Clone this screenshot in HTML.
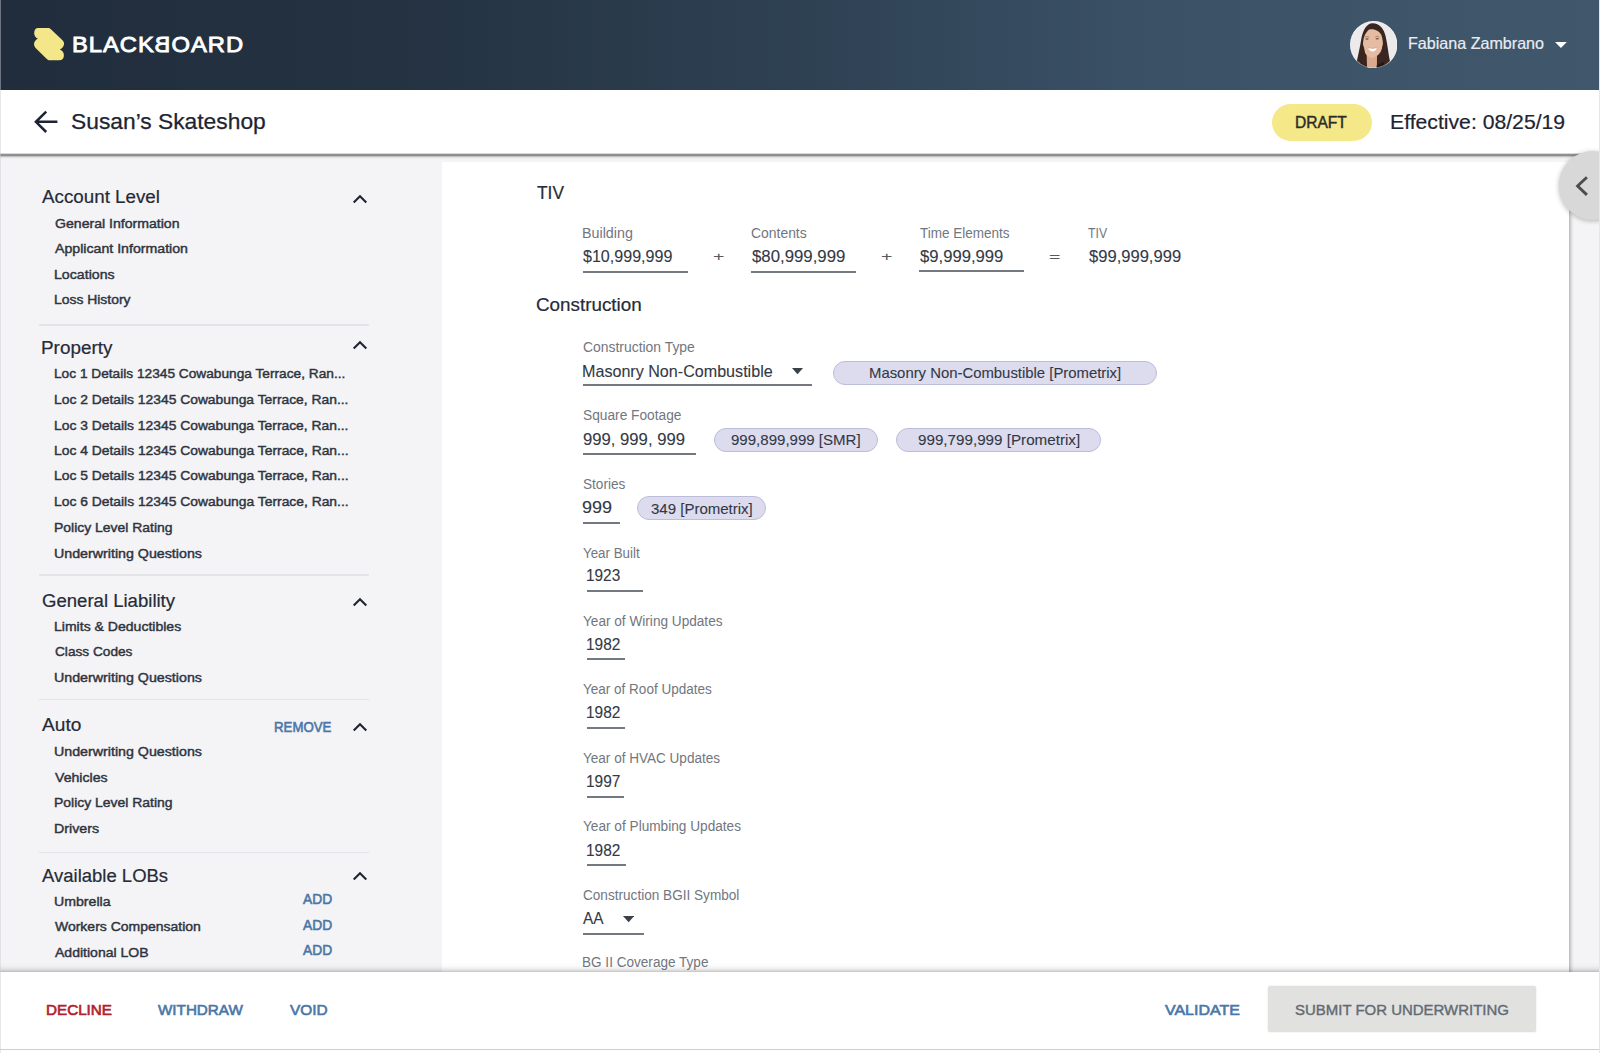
<!DOCTYPE html>
<html lang="en"><head><meta charset="utf-8"><title>Blackboard</title>
<style>
html,body{margin:0;padding:0}
body{width:1600px;height:1053px;position:relative;overflow:hidden;background:#f4f4f6;font-family:"Liberation Sans",Arial,sans-serif}
.a{position:absolute;display:block}
.t{position:absolute;white-space:pre;line-height:1;transform-origin:0 50%;display:block}
.pill{background:#dcdcee;border:1px solid #bcbddb;border-radius:13px;box-sizing:border-box}
#hdr{left:0;top:0;width:1600px;height:90px;background:linear-gradient(90deg,#212d3d 0%,#243242 25%,#2e4153 50%,#3b5166 72%,#40576c 100%)}
#sub{left:0;top:90px;width:1600px;height:63px;background:#fff}
#subsh{left:0;top:152.5px;width:1600px;height:6.5px;background:linear-gradient(180deg,#fff 0%,#dcdcdc 8%,#8f8f8f 24%,#8f8f8f 42%,#bdbdbf 57%,#e8e8ea 77%,#f4f4f6 100%)}
#main{left:441.8px;top:162px;width:1127.6px;height:820px;background:#fff}
#mainsh{left:1569.4px;top:162px;width:4.2px;height:820px;background:linear-gradient(90deg,rgba(0,0,0,.24) 0%,rgba(0,0,0,.17) 25%,rgba(0,0,0,.06) 60%,rgba(0,0,0,0) 100%)}
#foot{left:0;top:971.6px;width:1600px;height:82px;background:#fff}
#footsh{left:0;top:962.5px;width:1600px;height:9.1px;background:linear-gradient(180deg,rgba(0,0,0,0) 0%,rgba(0,0,0,.02) 35%,rgba(0,0,0,.07) 65%,rgba(0,0,0,.16) 88%,rgba(0,0,0,.24) 100%)}
#bline{left:0;top:1048.6px;width:1600px;height:1px;background:#cfcfcf}
#ledge{left:0;top:0;width:1px;height:1053px;background:rgba(205,205,210,.45)}
#tab{left:1558.5px;top:151.4px;width:68.8px;height:68.8px;border-radius:50%;background:#d8d8d8;box-shadow:0 1px 5px rgba(0,0,0,.28)}
#redge{left:1599px;top:0;width:1px;height:1053px;background:#e6e6e6}
#logo{position:absolute;left:71.6px;top:34px;font-size:22.2px;line-height:1;font-weight:400;color:#fff;-webkit-text-stroke:.85px #fff;white-space:pre;letter-spacing:.9px;transform-origin:0 50%;transform:scaleX(1.071)}
#logo i{display:inline-block;font-style:normal;transform:scaleX(-1);letter-spacing:0;margin-right:.9px}
#btn{left:1268px;top:986.4px;width:267.6px;height:45.4px;background:#e1e1e0;border-radius:2.5px;box-shadow:0 0 1.5px rgba(0,0,0,.18)}
</style></head><body>
<main>
<div id="main" class="a"></div>
<div id="mainsh" class="a"></div>
<div class="a" style="left:582.5px;top:271px;width:105.0px;height:1.6px;background:#747880"></div>
<div class="a" style="left:751px;top:271px;width:104.75px;height:1.6px;background:#747880"></div>
<div class="a" style="left:919.25px;top:270px;width:104.5px;height:1.6px;background:#747880"></div>
<div class="a" style="left:583.25px;top:384px;width:228.75px;height:1.6px;background:#747880"></div>
<div class="a" style="left:582.5px;top:453px;width:113.75px;height:1.6px;background:#747880"></div>
<div class="a" style="left:582.5px;top:522px;width:37.5px;height:1.6px;background:#747880"></div>
<div class="a" style="left:587px;top:590px;width:56.25px;height:1.6px;background:#747880"></div>
<div class="a" style="left:587px;top:658px;width:37.5px;height:1.6px;background:#747880"></div>
<div class="a" style="left:587px;top:727px;width:37.5px;height:1.6px;background:#747880"></div>
<div class="a" style="left:587px;top:796px;width:36.5px;height:1.6px;background:#747880"></div>
<div class="a" style="left:587px;top:864px;width:39px;height:1.6px;background:#747880"></div>
<div class="a" style="left:583.25px;top:933px;width:60.5px;height:1.6px;background:#747880"></div>
<div class="a pill" style="left:833.25px;top:360.75px;width:323.75px;height:24.25px"></div>
<div class="a pill" style="left:713.75px;top:427.75px;width:164.25px;height:24.0px"></div>
<div class="a pill" style="left:896.25px;top:427.75px;width:205.0px;height:24.0px"></div>
<div class="a pill" style="left:637px;top:496.25px;width:128.5px;height:24.0px"></div>
<svg class="a" style="left:792px;top:368.3px" width="11" height="6.3" viewBox="0 0 11 6.3"><path d="M0 0H11L5.50 6.3Z" fill="#3c404a"/></svg>
<svg class="a" style="left:622.5px;top:916.3px" width="11.25" height="6.3" viewBox="0 0 11.25 6.3"><path d="M0 0H11.25L5.62 6.3Z" fill="#3c404a"/></svg>
<span class="t" style="left:536.71px;top:184.00px;font-size:18.0px;color:#262b38;transform:scaleX(0.9646);-webkit-text-stroke:0.2px #262b38;">TIV</span>
<span class="t" style="left:536.15px;top:297.00px;font-size:17.5px;color:#262b38;transform:scaleX(1.0760);-webkit-text-stroke:0.2px #262b38;">Construction</span>
<span class="t" style="left:582.08px;top:226.00px;font-size:14.0px;color:#72767e;transform:scaleX(1.0204);">Building</span>
<span class="t" style="left:583.12px;top:248.00px;font-size:17.0px;color:#343945;transform:scaleX(0.9449);-webkit-text-stroke:0.1px #343945;">$10,999,999</span>
<span class="t" style="left:751.04px;top:226.00px;font-size:14.0px;color:#72767e;transform:scaleX(0.9940);">Contents</span>
<span class="t" style="left:751.62px;top:248.00px;font-size:17.0px;color:#343945;transform:scaleX(0.9876);-webkit-text-stroke:0.1px #343945;">$80,999,999</span>
<span class="t" style="left:919.70px;top:226.00px;font-size:14.0px;color:#72767e;transform:scaleX(0.9644);">Time Elements</span>
<span class="t" style="left:919.87px;top:248.00px;font-size:17.0px;color:#343945;transform:scaleX(0.9797);-webkit-text-stroke:0.1px #343945;">$9,999,999</span>
<span class="t" style="left:1088.47px;top:226.00px;font-size:14.0px;color:#72767e;transform:scaleX(0.8760);">TIV</span>
<span class="t" style="left:1088.62px;top:248.00px;font-size:17.0px;color:#343945;transform:scaleX(0.9743);-webkit-text-stroke:0.1px #343945;">$99,999,999</span>
<span class="t" style="left:712.65px;top:250.00px;font-size:13.0px;color:#555a62;transform:scaleX(1.5037);">+</span>
<span class="t" style="left:880.85px;top:250.00px;font-size:13.0px;color:#555a62;transform:scaleX(1.5037);">+</span>
<span class="t" style="left:1049.35px;top:250.00px;font-size:13.0px;color:#555a62;transform:scaleX(1.5037);">=</span>
<span class="t" style="left:582.54px;top:340.00px;font-size:14.0px;color:#72767e;transform:scaleX(0.9932);">Construction Type</span>
<span class="t" style="left:581.98px;top:363.00px;font-size:17.0px;color:#343945;transform:scaleX(0.9475);-webkit-text-stroke:0.1px #343945;">Masonry Non-Combustible</span>
<span class="t" style="left:582.63px;top:408.00px;font-size:14.0px;color:#72767e;transform:scaleX(0.9809);">Square Footage</span>
<span class="t" style="left:582.52px;top:431.00px;font-size:17.0px;color:#343945;transform:scaleX(0.9807);-webkit-text-stroke:0.1px #343945;">999, 999, 999</span>
<span class="t" style="left:582.63px;top:477.00px;font-size:14.0px;color:#72767e;transform:scaleX(0.9720);">Stories</span>
<span class="t" style="left:582.46px;top:499.00px;font-size:17.0px;color:#343945;transform:scaleX(1.0605);-webkit-text-stroke:0.1px #343945;">999</span>
<span class="t" style="left:582.96px;top:546.00px;font-size:14.0px;color:#72767e;transform:scaleX(0.9532);">Year Built</span>
<span class="t" style="left:585.87px;top:567.00px;font-size:17.0px;color:#343945;transform:scaleX(0.9056);-webkit-text-stroke:0.1px #343945;">1923</span>
<span class="t" style="left:582.95px;top:614.00px;font-size:14.0px;color:#72767e;transform:scaleX(0.9727);">Year of Wiring Updates</span>
<span class="t" style="left:585.87px;top:636.00px;font-size:17.0px;color:#343945;transform:scaleX(0.9084);-webkit-text-stroke:0.1px #343945;">1982</span>
<span class="t" style="left:582.95px;top:682.00px;font-size:14.0px;color:#72767e;transform:scaleX(0.9657);">Year of Roof Updates</span>
<span class="t" style="left:585.87px;top:704.00px;font-size:17.0px;color:#343945;transform:scaleX(0.9084);-webkit-text-stroke:0.1px #343945;">1982</span>
<span class="t" style="left:582.95px;top:751.00px;font-size:14.0px;color:#72767e;transform:scaleX(0.9675);">Year of HVAC Updates</span>
<span class="t" style="left:585.87px;top:773.00px;font-size:17.0px;color:#343945;transform:scaleX(0.9084);-webkit-text-stroke:0.1px #343945;">1997</span>
<span class="t" style="left:582.95px;top:819.00px;font-size:14.0px;color:#72767e;transform:scaleX(0.9746);">Year of Plumbing Updates</span>
<span class="t" style="left:585.87px;top:842.00px;font-size:17.0px;color:#343945;transform:scaleX(0.9084);-webkit-text-stroke:0.1px #343945;">1982</span>
<span class="t" style="left:582.56px;top:888.00px;font-size:14.0px;color:#72767e;transform:scaleX(0.9707);">Construction BGII Symbol</span>
<span class="t" style="left:583.27px;top:910.00px;font-size:17.0px;color:#343945;transform:scaleX(0.9022);-webkit-text-stroke:0.1px #343945;">AA</span>
<span class="t" style="left:582.14px;top:955.00px;font-size:14.0px;color:#72767e;transform:scaleX(0.9692);">BG II Coverage Type</span>
<span class="t" style="left:868.83px;top:365.00px;font-size:15.0px;color:#333846;transform:scaleX(0.9919);-webkit-text-stroke:0.1px #333846;">Masonry Non-Combustible [Prometrix]</span>
<span class="t" style="left:731.34px;top:432.00px;font-size:15.0px;color:#333846;transform:scaleX(1.0032);-webkit-text-stroke:0.1px #333846;">999,899,999 [SMR]</span>
<span class="t" style="left:918.09px;top:432.00px;font-size:15.0px;color:#333846;transform:scaleX(1.0131);-webkit-text-stroke:0.1px #333846;">999,799,999 [Prometrix]</span>
<span class="t" style="left:651.23px;top:501.00px;font-size:15.0px;color:#333846;transform:scaleX(1.0007);-webkit-text-stroke:0.1px #333846;">349 [Prometrix]</span>
</main>
<aside><nav>
<div class="a" style="left:39px;top:324.25px;width:330px;height:1.5px;background:#e4e4e8"></div>
<div class="a" style="left:39px;top:574.35px;width:330px;height:1.5px;background:#e4e4e8"></div>
<div class="a" style="left:39px;top:698.75px;width:330px;height:1.5px;background:#e4e4e8"></div>
<div class="a" style="left:39px;top:851.55px;width:330px;height:1.5px;background:#e4e4e8"></div>
<svg class="a" style="left:350.6px;top:191.8px" width="18" height="14" viewBox="0 0 18 14"><path d="M2.7 10.6 L9 4.3 L15.3 10.6" fill="none" stroke="#1f2430" stroke-width="2.1"/></svg>
<svg class="a" style="left:350.6px;top:338.2px" width="18" height="14" viewBox="0 0 18 14"><path d="M2.7 10.6 L9 4.3 L15.3 10.6" fill="none" stroke="#1f2430" stroke-width="2.1"/></svg>
<svg class="a" style="left:350.6px;top:595.4px" width="18" height="14" viewBox="0 0 18 14"><path d="M2.7 10.6 L9 4.3 L15.3 10.6" fill="none" stroke="#1f2430" stroke-width="2.1"/></svg>
<svg class="a" style="left:350.6px;top:719.5px" width="18" height="14" viewBox="0 0 18 14"><path d="M2.7 10.6 L9 4.3 L15.3 10.6" fill="none" stroke="#1f2430" stroke-width="2.1"/></svg>
<svg class="a" style="left:350.6px;top:869px" width="18" height="14" viewBox="0 0 18 14"><path d="M2.7 10.6 L9 4.3 L15.3 10.6" fill="none" stroke="#1f2430" stroke-width="2.1"/></svg>
<span class="t" style="left:42.37px;top:188.00px;font-size:18.0px;color:#262b38;transform:scaleX(1.0434);-webkit-text-stroke:0.2px #262b38;">Account Level</span>
<span class="t" style="left:41.36px;top:339.00px;font-size:18.0px;color:#262b38;transform:scaleX(1.0492);-webkit-text-stroke:0.2px #262b38;">Property</span>
<span class="t" style="left:41.97px;top:592.00px;font-size:18.0px;color:#262b38;transform:scaleX(1.0309);-webkit-text-stroke:0.2px #262b38;">General Liability</span>
<span class="t" style="left:42.37px;top:716.00px;font-size:18.0px;color:#262b38;transform:scaleX(1.0620);-webkit-text-stroke:0.2px #262b38;">Auto</span>
<span class="t" style="left:42.37px;top:867.00px;font-size:18.0px;color:#262b38;transform:scaleX(1.0273);-webkit-text-stroke:0.2px #262b38;">Available LOBs</span>
<span class="t" style="left:54.73px;top:217.00px;font-size:13.5px;color:#2f343f;transform:scaleX(1.0439);-webkit-text-stroke:0.45px #2f343f;">General Information</span>
<span class="t" style="left:55.41px;top:242.00px;font-size:13.5px;color:#2f343f;transform:scaleX(1.0485);-webkit-text-stroke:0.45px #2f343f;">Applicant Information</span>
<span class="t" style="left:54.27px;top:268.00px;font-size:13.5px;color:#2f343f;transform:scaleX(1.0485);-webkit-text-stroke:0.45px #2f343f;">Locations</span>
<span class="t" style="left:54.29px;top:293.00px;font-size:13.5px;color:#2f343f;transform:scaleX(1.0299);-webkit-text-stroke:0.45px #2f343f;">Loss History</span>
<span class="t" style="left:54.30px;top:367.00px;font-size:13.5px;color:#2f343f;transform:scaleX(1.0144);-webkit-text-stroke:0.45px #2f343f;">Loc 1 Details 12345 Cowabunga Terrace, Ran...</span>
<span class="t" style="left:54.30px;top:393.00px;font-size:13.5px;color:#2f343f;transform:scaleX(1.0252);-webkit-text-stroke:0.45px #2f343f;">Loc 2 Details 12345 Cowabunga Terrace, Ran...</span>
<span class="t" style="left:54.30px;top:419.00px;font-size:13.5px;color:#2f343f;transform:scaleX(1.0252);-webkit-text-stroke:0.45px #2f343f;">Loc 3 Details 12345 Cowabunga Terrace, Ran...</span>
<span class="t" style="left:54.29px;top:444.00px;font-size:13.5px;color:#2f343f;transform:scaleX(1.0259);-webkit-text-stroke:0.45px #2f343f;">Loc 4 Details 12345 Cowabunga Terrace, Ran...</span>
<span class="t" style="left:54.29px;top:469.00px;font-size:13.5px;color:#2f343f;transform:scaleX(1.0259);-webkit-text-stroke:0.45px #2f343f;">Loc 5 Details 12345 Cowabunga Terrace, Ran...</span>
<span class="t" style="left:54.29px;top:495.00px;font-size:13.5px;color:#2f343f;transform:scaleX(1.0259);-webkit-text-stroke:0.45px #2f343f;">Loc 6 Details 12345 Cowabunga Terrace, Ran...</span>
<span class="t" style="left:54.29px;top:521.00px;font-size:13.5px;color:#2f343f;transform:scaleX(1.0319);-webkit-text-stroke:0.45px #2f343f;">Policy Level Rating</span>
<span class="t" style="left:54.34px;top:547.00px;font-size:13.5px;color:#2f343f;transform:scaleX(1.0542);-webkit-text-stroke:0.45px #2f343f;">Underwriting Questions</span>
<span class="t" style="left:54.28px;top:620.00px;font-size:13.5px;color:#2f343f;transform:scaleX(1.0399);-webkit-text-stroke:0.45px #2f343f;">Limits &amp; Deductibles</span>
<span class="t" style="left:54.73px;top:645.00px;font-size:13.5px;color:#2f343f;transform:scaleX(1.0118);-webkit-text-stroke:0.45px #2f343f;">Class Codes</span>
<span class="t" style="left:54.34px;top:671.00px;font-size:13.5px;color:#2f343f;transform:scaleX(1.0542);-webkit-text-stroke:0.45px #2f343f;">Underwriting Questions</span>
<span class="t" style="left:54.34px;top:745.00px;font-size:13.5px;color:#2f343f;transform:scaleX(1.0542);-webkit-text-stroke:0.45px #2f343f;">Underwriting Questions</span>
<span class="t" style="left:55.37px;top:771.00px;font-size:13.5px;color:#2f343f;transform:scaleX(1.0458);-webkit-text-stroke:0.45px #2f343f;">Vehicles</span>
<span class="t" style="left:54.29px;top:796.00px;font-size:13.5px;color:#2f343f;transform:scaleX(1.0319);-webkit-text-stroke:0.45px #2f343f;">Policy Level Rating</span>
<span class="t" style="left:54.27px;top:822.00px;font-size:13.5px;color:#2f343f;transform:scaleX(1.0528);-webkit-text-stroke:0.45px #2f343f;">Drivers</span>
<span class="t" style="left:54.35px;top:895.00px;font-size:13.5px;color:#2f343f;transform:scaleX(1.0463);-webkit-text-stroke:0.45px #2f343f;">Umbrella</span>
<span class="t" style="left:55.37px;top:920.00px;font-size:13.5px;color:#2f343f;transform:scaleX(1.0354);-webkit-text-stroke:0.45px #2f343f;">Workers Compensation</span>
<span class="t" style="left:55.41px;top:946.00px;font-size:13.5px;color:#2f343f;transform:scaleX(1.0393);-webkit-text-stroke:0.45px #2f343f;">Additional LOB</span>
<span class="t" style="left:274.20px;top:720.00px;font-size:14.0px;color:#4a77a8;transform:scaleX(0.9456);-webkit-text-stroke:0.6px #4a77a8;">REMOVE</span>
<span class="t" style="left:302.57px;top:892.00px;font-size:14.0px;color:#4a77a8;transform:scaleX(0.9842);-webkit-text-stroke:0.6px #4a77a8;">ADD</span>
<span class="t" style="left:302.57px;top:918.00px;font-size:14.0px;color:#4a77a8;transform:scaleX(0.9842);-webkit-text-stroke:0.6px #4a77a8;">ADD</span>
<span class="t" style="left:302.57px;top:943.00px;font-size:14.0px;color:#4a77a8;transform:scaleX(0.9842);-webkit-text-stroke:0.6px #4a77a8;">ADD</span>
</nav></aside>
<header>
<div id="hdr" class="a"></div>
<svg class="a" style="left:32px;top:25px" width="36" height="38" viewBox="32 25 36 38"><path d="M38.4 27.9 H47.9 C49.2 27.9 50 28.3 50.9 29.2 L62.5 40.2 C64.1 41.8 64.4 43.8 63.7 45.6 C63 47.4 61.6 48.8 59.8 49.6 C62.5 50.7 63.9 52.6 63.9 55.2 C63.9 58.4 62.2 60.3 59.2 60.3 H49.8 C48.5 60.3 47.7 59.9 46.8 59 L35.6 47.9 C34 46.3 33.7 44 34.4 42.3 C35 40.6 36.3 39.4 38 38.7 C35.2 37.6 34.2 35.4 34.2 33 C34.2 29.8 35.6 27.9 38.4 27.9 Z" fill="#f3e78a"/></svg>
<div id="logo">BLACK<i>B</i>OARD</div>
<svg class="a" style="left:1349.9px;top:20.9px" width="47.4" height="47.4" viewBox="0 0 48 48"><defs><clipPath id="av"><circle cx="24" cy="24" r="23.9"/></clipPath></defs>
<g clip-path="url(#av)"><rect width="48" height="48" fill="#eceaea"/>
<path d="M22.8 2.3 C17 2.5 13 9 11.3 19 C10 27 8.5 34 6.6 42 L16 49 L32 49 L40.5 41 C38.8 33 38.2 25 36.2 16 C34.5 8 30 2.3 22.8 2.3Z" fill="#3a2620"/>
<path d="M16.8 32 L17.3 48 L27.2 48 L27.4 32Z" fill="#d9aa8e"/>
<path d="M19.5 8.6 C24 7.4 30 9.5 32 15 C34 21 33.6 27 31 31.5 C28.5 35.6 25 37.2 22.5 37.2 C19 37.2 15.5 34 14 29.5 C12.5 25 13 18 15.5 13.5 C16.8 11.2 18 9.6 19.5 8.6Z" fill="#e5bba2"/>
<path d="M13.6 24 C12.6 32 11 40 9.6 48 L17.6 48 C16.2 42 15.4 36 15 31Z M33.3 24 C33.5 32 35 40 38.4 46 L27 48 C29 43 31 37 31.6 31Z" fill="#3a2620"/>
<path d="M8.5 48 L11.5 42.5 L17.6 46.4 L17.6 48Z M27 48 L27 45.2 L33.5 41.2 L37 48Z" fill="#1c1a1c"/>
<ellipse cx="17.2" cy="18.3" rx="1.7" ry=".8" fill="#5c3d30" opacity=".85"/><ellipse cx="27.6" cy="18" rx="1.7" ry=".8" fill="#5c3d30" opacity=".85"/>
<path d="M15.2 16.4 Q17.2 15.3 19.4 16.2 M25.6 16 Q27.8 15 29.8 16.2" fill="none" stroke="#6b4a3c" stroke-width=".7" opacity=".7"/>
<path d="M18.4 27.1 Q22.8 28.5 27.3 27 Q26.2 30.7 22.8 30.9 Q19.7 30.7 18.4 27.1Z" fill="#fff"/>
<path d="M18.4 27.1 Q22.8 28.5 27.3 27" fill="none" stroke="#c98a78" stroke-width=".5"/>
</g><circle cx="24" cy="24" r="23.6" fill="none" stroke="rgba(255,255,255,.55)" stroke-width=".8"/></svg>
<span class="t" style="left:1407.58px;top:35.00px;font-size:16.5px;color:#e9edf1;transform:scaleX(0.9755);-webkit-text-stroke:0.2px #e9edf1;">Fabiana Zambrano</span>
<svg class="a" style="left:1555.3px;top:41.7px" width="11.8" height="5.9" viewBox="0 0 11.8 5.9"><path d="M0 0H11.8L5.90 5.9Z" fill="#ffffff"/></svg>
</header>
<section>
<div id="sub" class="a"></div>
<div id="subsh" class="a"></div>
<div id="tab" class="a"></div>
<svg class="a" style="left:1570px;top:172px" width="24" height="28" viewBox="1570 172 24 28"><path d="M1586.9 177.2 L1577.6 186 L1586.9 194.9" fill="none" stroke="#4d4d4e" stroke-width="2.9"/></svg>
<svg class="a" style="left:32px;top:108px" width="28" height="28" viewBox="32 108 28 28"><path d="M57.4 121.8 H36.2 M46.2 111.6 L35.9 121.8 L46.2 132" fill="none" stroke="#1c2333" stroke-width="2.5"/></svg>
<div class="a" style="left:1272.3px;top:103.5px;width:99.3px;height:37.8px;border-radius:19px;background:#f4e888"></div>
<span class="t" style="left:71.09px;top:111.00px;font-size:22.0px;color:#1d2432;transform:scaleX(1.0361);-webkit-text-stroke:0.25px #1d2432;">Susan’s Skateshop</span>
<span class="t" style="left:1295.44px;top:115.00px;font-size:16.0px;color:#2b2d2a;transform:scaleX(0.9712);-webkit-text-stroke:0.45px #2b2d2a;">DRAFT</span>
<span class="t" style="left:1390.06px;top:111.00px;font-size:21.0px;color:#1d2432;transform:scaleX(1.0090);-webkit-text-stroke:0.2px #1d2432;">Effective: 08/25/19</span>
</section>
<footer>
<div id="footsh" class="a"></div>
<div id="foot" class="a"></div>
<div id="bline" class="a"></div>
<div id="btn" class="a"></div>
<span class="t" style="left:45.97px;top:1002.00px;font-size:15.5px;color:#b3202d;transform:scaleX(0.9818);-webkit-text-stroke:0.65px #b3202d;">DECLINE</span>
<span class="t" style="left:158.05px;top:1002.00px;font-size:15.5px;color:#4a77a8;transform:scaleX(0.9814);-webkit-text-stroke:0.65px #4a77a8;">WITHDRAW</span>
<span class="t" style="left:290.26px;top:1002.00px;font-size:15.5px;color:#4a77a8;transform:scaleX(0.9935);-webkit-text-stroke:0.65px #4a77a8;">VOID</span>
<span class="t" style="left:1165.26px;top:1002.00px;font-size:15.5px;color:#4a77a8;transform:scaleX(1.0293);-webkit-text-stroke:0.65px #4a77a8;">VALIDATE</span>
<span class="t" style="left:1294.81px;top:1002.00px;font-size:15.5px;color:#626a73;transform:scaleX(0.9653);-webkit-text-stroke:0.4px #626a73;">SUBMIT FOR UNDERWRITING</span>
</footer>
<div id="redge" class="a"></div><div id="ledge" class="a"></div>
</body></html>
